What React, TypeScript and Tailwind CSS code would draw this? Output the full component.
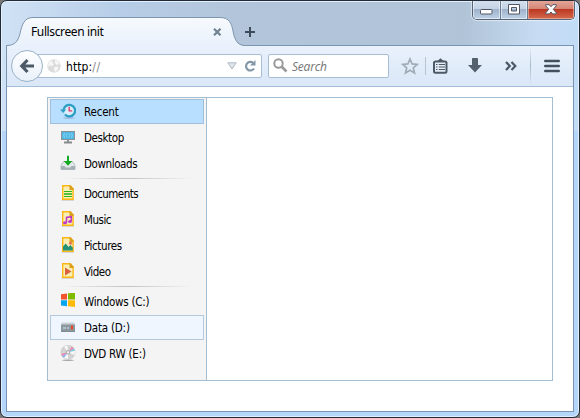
import type { ReactNode } from "react";

const FileIcon = ({ children }: { children: ReactNode }) => (
  <svg width="16" height="16" viewBox="0 0 16 16">
    <path d="M1.500 15.500h12.500" stroke="#000" strokeOpacity=".12" />
    <path d="M2.700.8h7.500l2.900 3.200v10.200H2.700z" fill="#f9efb4" stroke="#fcb614" strokeWidth="1.400" />
    <path d="M9.500.2h1l3.200 3.600V5H9.500z" fill="#daa01c" />
    {children}
  </svg>
);

const icons: Record<string, ReactNode> = {
  Recent: (
    <svg width="16" height="16" viewBox="0 0 16 16">
      <ellipse cx="9" cy="15" rx="6" ry=".8" fill="#558" opacity=".3" />
      <circle cx="9.200" cy="7.300" r="5.400" fill="#d7edf8" />
      <path d="M3.500 7.600A5.800 5.800 0 1 1 5 11.500" fill="none" stroke="#2b9fc4" strokeWidth="2.300" />
      <path d="M0 6.500h6.200L3.200 10z" fill="#2b9fc4" />
      <path d="M9.200 3.800v4.100h3" fill="none" stroke="#e43b68" strokeWidth="1.400" />
    </svg>
  ),
  Desktop: (
    <svg width="16" height="16" viewBox="0 0 16 16">
      <rect x="1.500" y="2.500" width="13" height="8" fill="#4db8e6" stroke="#8b9297" />
      <path d="M4.500 4Q3 6.500 4.500 9M7 4.500q-1.500 2 0 4M9 4.500q1.500 2 0 4M11.500 4Q13 6.500 11.500 9" fill="none" stroke="#8fd3ee" />
      <path d="M8 11v2.500M4 13.500h8" stroke="#858a8e" strokeWidth="1.800" />
    </svg>
  ),
  Downloads: (
    <svg width="16" height="16" viewBox="0 0 16 16">
      <path d="M3.500 6.500h9l2.500 4v4H1v-4z" fill="#e4e8ea" stroke="#b3bcc0" />
      <path d="M1 11h3.500l1.200 1.500h4.600l1.200-1.500H15v3.500H1z" fill="#a5b0b5" />
      <path d="M8 .8v7" stroke="#12aa22" strokeWidth="2" />
      <path d="M3.700 6h8.600L8 10.700z" fill="#12aa22" />
    </svg>
  ),
  Documents: (
    <FileIcon>
      <path d="M4 6.500h8M4 11.500h8" stroke="#2db51c" />
      <path d="M4 9h8" stroke="#58c13c" strokeWidth="2" />
    </FileIcon>
  ),
  Music: (
    <FileIcon>
      <path d="M6.500 11.500v-5l4.800-.8v4.500" fill="none" stroke="#bd37c7" strokeWidth="1.600" />
      <ellipse cx="5" cy="11.700" rx="2" ry="1.500" fill="#bd37c7" />
      <ellipse cx="10" cy="10.500" rx="1.900" ry="1.500" fill="#bd37c7" />
    </FileIcon>
  ),
  Pictures: (
    <FileIcon>
      <path d="M3 13.500V9.500l2.700-3L8.500 10l1.800-2 2.500 2.500v3z" fill="#249278" />
      <circle cx="10.500" cy="6.200" r="1.600" fill="#e7785b" />
    </FileIcon>
  ),
  Video: (
    <FileIcon>
      <path d="M5 4.500l6.500 4-6.500 4z" fill="#d9623e" />
    </FileIcon>
  ),
  "Windows (C:)": (
    <svg width="16" height="16" viewBox="0 0 16 16">
      <path d="M1 1.200l6-.8v6H1z" fill="#f1532c" />
      <path d="M8 .2l7-.4v6.600H8z" fill="#7fba00" />
      <path d="M1 7.300h6v6l-6-.8z" fill="#05a5ef" />
      <path d="M8 7.300h7v6.700l-7-.7z" fill="#ffba08" />
    </svg>
  ),
  "Data (D:)": (
    <svg width="16" height="16" viewBox="0 0 16 16">
      <path d="M2 3.500h12l1 2v6.500H1V5.500z" fill="#cbd0d3" />
      <rect x="1" y="5.500" width="14" height="6.300" fill="#8c989f" />
      <path d="M1 12.300h14" stroke="#667078" />
      <path d="M3 9h3m1 0h2" stroke="#dceaf2" strokeWidth="1.200" />
      <rect x="11" y="6.500" width="2" height="4" fill="#e84825" />
    </svg>
  ),
  "DVD RW (E:)": (
    <svg width="16" height="16" viewBox="0 0 16 16">
      <ellipse cx="8" cy="15.200" rx="6" ry=".7" fill="#aaa" />
      <circle cx="8" cy="7.300" r="7" fill="#d2d2d2" stroke="#c4c4c4" strokeWidth=".6" />
      <path d="M8 7.300L4 1.500 7.500.4zM8 7.300L15 6l-.5 4zM8 7.300L8 14l-4-1z" fill="#f8f8f8" />
      <path d="M8 7.300l4-5.700 2 2z" fill="#f184ad" />
      <path d="M8 7.300l6-3.700.8 2z" fill="#70cfe9" />
      <path d="M8 7.300L1.200 9l1 2.300z" fill="#f184ad" />
      <path d="M8 7.300l-5.800 4 1.600 1.600z" fill="#89b4ee" />
      <circle cx="8" cy="7.300" r="2.200" fill="#b2b2b2" />
      <circle cx="8" cy="7.300" r="1" fill="#fff" />
    </svg>
  ),
};

const groups = [
  ["Recent", "Desktop", "Downloads"],
  ["Documents", "Music", "Pictures", "Video"],
  ["Windows (C:)", "Data (D:)", "DVD RW (E:)"],
];

const rowTone: Record<string, string> = {
  Recent: "border-[#9fbfdb] bg-[#b8dfff]",
  "Data (D:)": "border-[#b4c9de] bg-[#eff6ff]",
};

const textFit: Record<string, string> = {
  Recent: "tracking-[-0.2px]",
  Downloads: "tracking-[-0.4px]",
  Documents: "tracking-[-0.55px]",
  Music: "tracking-[-0.5px]",
  Video: "tracking-[-0.5px]",
  "Windows (C:)": "tracking-[-0.25px]",
  "DVD RW (E:)": "tracking-[-0.25px]",
  "Data (D:)": "tracking-[-0.2px]",
};

const Sidebar = () => (
  <nav className="w-[159px] shrink-0 border-r border-[#a3bdd3] bg-[#f4f4f4] pt-px pl-[2px] font-['DejaVu_Sans_Condensed','DejaVu_Sans',sans-serif] text-[11.5px] text-black">
    {groups.map((group, i) => (
      <div key={group[0]}>
        {i > 0 && (
          <div className="h-1 pt-px">
            <div className="ml-3 h-px w-[130px] bg-linear-to-r from-transparent via-[#c2c2c2] to-transparent" />
          </div>
        )}
        {group.map((name) => (
          <div
            key={name}
            className={`mb-px flex h-[25px] w-[154px] items-center gap-2 border pl-[9px] ${rowTone[name] ?? "border-transparent"}`}
          >
            <span className="mb-px size-4">{icons[name]}</span>
            <span className={`pt-[2px] leading-[17px] whitespace-nowrap ${textFit[name] ?? "tracking-[-0.4px]"}`}>{name}</span>
          </div>
        ))}
      </div>
    ))}
  </nav>
);

const TitleBar = () => (
  <header className="flex h-[45px] shrink-0">
    <div className="relative ml-[5px] h-[45px] w-[252px]">
      <svg className="absolute top-0 left-0" width="252" height="46" viewBox="0 0 252 46">
        <defs>
          <linearGradient id="tab" x2="0" y2="1">
            <stop stopColor="#f7fafd" />
            <stop offset="1" stopColor="#e9f1fc" />
          </linearGradient>
        </defs>
        <path
          d="M.5 46v-.5C8 45.500 12 42 14 33.500S18 17.500 27 17.500H214c9 0 11.500 5.500 13 13.500s4 14.500 12 14.500V46z"
          fill="url(#tab)"
        />
        <path
          d="M.5 45.500C8 45.500 12 42 14 33.500S18 17.500 27 17.500H214c9 0 11.500 5.500 13 13.500s4 14.500 12 14.500h13"
          fill="none"
          stroke="#7d95ad"
        />
      </svg>
      <div className="relative flex h-full items-center pt-[18px] pl-[25px]">
        <span className="w-[182px] font-['Noto_Sans',sans-serif] text-[12px] tracking-[-0.38px] text-black">Fullscreen init</span>
        <svg className="shrink-0" width="9" height="8" viewBox="0 0 9 8">
          <path d="M1 .8l6.500 6.400M7.500.8L1 7.200" stroke="#728490" strokeWidth="2.300" />
        </svg>
        <svg className="ml-[23px] shrink-0" width="10" height="10" viewBox="0 0 10 10">
          <path d="M5 0v10M0 5h10" stroke="#3e4b58" strokeWidth="2" />
        </svg>
      </div>
    </div>
    <div className="ml-[214px] flex h-5 w-[103px] overflow-hidden rounded-b-[5px] border border-t-0 border-[#566477] shadow-[0_0_1px_1px_#ffffff88]">
      <div className="flex w-7 items-center justify-center border-r border-[#6a7c91] bg-[linear-gradient(#d5e1ef_0,#c3d2e4_48%,#9fb4cc_50%,#bdd0e6_100%)] shadow-[inset_0_0_0_1px_#ffffff88]">
        <svg className="mt-[5px]" width="13" height="6" viewBox="0 0 13 6">
          <rect x=".5" y=".5" width="11.500" height="4.500" rx="1" fill="#fff" stroke="#535666" />
        </svg>
      </div>
      <div className="flex w-[27px] items-center justify-center border-r border-[#6a7c91] bg-[linear-gradient(#d5e1ef_0,#c3d2e4_48%,#9fb4cc_50%,#bdd0e6_100%)] shadow-[inset_0_0_0_1px_#ffffff88]">
        <svg width="12" height="11" viewBox="0 0 12 11">
          <path d="M.5.5h11v9.500H.5zM3.500 3.500v3.500h5V3.500z" fill="#fff" fillRule="evenodd" stroke="#535666" />
        </svg>
      </div>
      <div className="flex flex-1 items-center justify-center bg-[linear-gradient(#e3aa9e_0,#d48472_48%,#bb3922_50%,#d4694d_100%)] shadow-[inset_0_0_0_1px_#ffffff66]">
        <svg width="12" height="11" viewBox="0 0 12 11">
          <path
            d="M.7.7h3.600L6 2.700 7.700.7h3.600v1L8.300 5.300l3 3.600v1H7.700L6 8l-1.700 1.900H.7v-1l3-3.600-3-3.600z"
            fill="#fff"
            stroke="#535666"
          />
        </svg>
      </div>
    </div>
  </header>
);

const Toolbar = () => (
  <div className="flex h-[41px] shrink-0 items-center border-b border-[#a3bfd9] bg-linear-to-b from-[#e9f1fc] to-[#dae7f7] pl-1">
    <div className="z-10 flex size-8 shrink-0 items-center justify-center rounded-full border border-[#9bb2c7] bg-linear-to-b from-[#fdfeff] to-[#eaf1fa]">
      <svg width="16" height="16" viewBox="0 0 16 16">
        <path d="M8.500 2L2.800 8l5.700 6M3 8h12" fill="none" stroke="#4c5966" strokeWidth="3.200" />
      </svg>
    </div>
    <div className="-ml-[7px] flex h-6 w-[226px] shrink-0 items-center rounded-r-[2px] border border-[#a6bfd7] bg-white pl-[10px]">
      <svg width="14" height="14" viewBox="0 0 14 14">
        <circle cx="7" cy="7" r="6.700" fill="#dcdcdc" />
        <path d="M2 2.500l4-.8L5 4l2 .8L5.500 7 3 6.500 1 8zM8 1l3 1 1.500 3-3 1L8 4zM7.500 8l3-.5 1 2L8.500 13 7 10.500z" fill="#f7f7f7" />
      </svg>
      <span className="ml-[5px] w-[161px] pt-px font-['DejaVu_Sans_Condensed','DejaVu_Sans',sans-serif] text-[12px] tracking-[0.1px] text-black">
        http:<span className="tracking-[0.6px] text-[#858585]">//</span>
      </span>
      <svg width="10" height="8" viewBox="0 0 10 8">
        <path d="M.8.8h8.400L5 7z" fill="#dfe5e9" stroke="#b0bac3" />
      </svg>
      <svg className="ml-[7px]" width="12" height="12" viewBox="0 0 12 12">
        <path d="M9 2.800A4.300 4.300 0 1 0 10 8.500" fill="none" stroke="#8497a6" strokeWidth="2.200" />
        <path d="M11.500 0v5.500H6z" fill="#8497a6" />
      </svg>
    </div>
    <div className="ml-1.5 flex h-6 w-[121px] shrink-0 items-center rounded-[2px] border border-[#a6bfd7] bg-white pl-1">
      <svg className="mb-px" width="15" height="15" viewBox="0 0 15 15">
        <circle cx="5.500" cy="5.500" r="4.200" fill="none" stroke="#999" strokeWidth="2" />
        <path d="M8.500 8.500l5 5" stroke="#999" strokeWidth="2.600" />
      </svg>
      <span className="ml-1 pt-px font-['Open_Sans',sans-serif] text-[12px] tracking-[-0.2px] text-[#747474] italic">Search</span>
    </div>
    <svg className="ml-3 shrink-0" width="18" height="18" viewBox="0 0 18 18">
      <path d="M9 2l2.100 4.900 5.100.5-3.900 3.400 1.200 5.200L9 13.300 4.500 16l1.200-5.200-3.900-3.400 5.100-.5z" fill="none" stroke="#a1acb7" strokeWidth="1.700" />
    </svg>
    <div className="ml-1.5 h-[18px] w-px shrink-0 bg-[#b6c5d3]" />
    <svg className="mb-px ml-[7px] shrink-0" width="15" height="16" viewBox="0 0 15 16">
      <path d="M3 3.500l2-1L7.500.3 10 2.500l2 1z" fill="#4c5966" />
      <rect x="1" y="3.500" width="12.500" height="11.200" rx="1.500" fill="#e4edf7" stroke="#4c5966" strokeWidth="2" />
      <path d="M3 6.500h1.500m1.300 0H12M3 9h1.500m1.300 0H12M3 11.500h1.500m1.300 0H12" stroke="#4c5966" strokeWidth="1.200" />
    </svg>
    <svg className="mb-px ml-5 shrink-0" width="15" height="15" viewBox="0 0 15 15">
      <path d="M4 .8q0-.8.8-.8h4.400q.8 0 .8.800V7H14L7 14.500 0 7h4z" fill="#53606d" />
    </svg>
    <svg className="ml-[22px] shrink-0" width="12" height="10" viewBox="0 0 12 10">
      <path d="M1 1l3.800 4L1 9M6.500 1l3.800 4-3.800 4" fill="none" stroke="#4a5764" strokeWidth="2.200" />
    </svg>
    <div className="ml-[13px] h-[38px] w-px shrink-0 bg-linear-to-b from-transparent via-[#a5b9cb] to-transparent" />
    <svg className="mb-px ml-[13px] shrink-0" width="16" height="14" viewBox="0 0 16 14">
      <path d="M1.300 2h13.400M1.300 7h13.400M1.300 12h13.400" stroke="#43505d" strokeWidth="2.600" strokeLinecap="round" />
    </svg>
  </div>
);

export default function App() {
  return (
    <div className="h-[418px] w-[580px] overflow-hidden bg-[#777]">
      <div className="flex h-full flex-col overflow-hidden rounded-[7px] border border-[#242a35] bg-[#b5d6f8] bg-[linear-gradient(90deg,#d0e2f5_0,#b7cee8_20%,#b2c5da_40%,#b0c3d7_80%,#c7dcf3_93%,#c2dcf7_100%)] bg-size-[100%_130px] bg-no-repeat shadow-[inset_0_0_0_1px_#e0f0ff]">
        <div className="-mt-px">
          <TitleBar />
        </div>
        <main className="mr-[5px] mb-[5px] ml-[5px] flex flex-1 flex-col border border-[#7896b4] bg-white">
          <Toolbar />
          <section className="mt-[10px] ml-10 flex h-[284px] w-[506px] border border-[#a3bdd3]">
            <Sidebar />
            <div className="flex-1" />
          </section>
        </main>
      </div>
    </div>
  );
}
